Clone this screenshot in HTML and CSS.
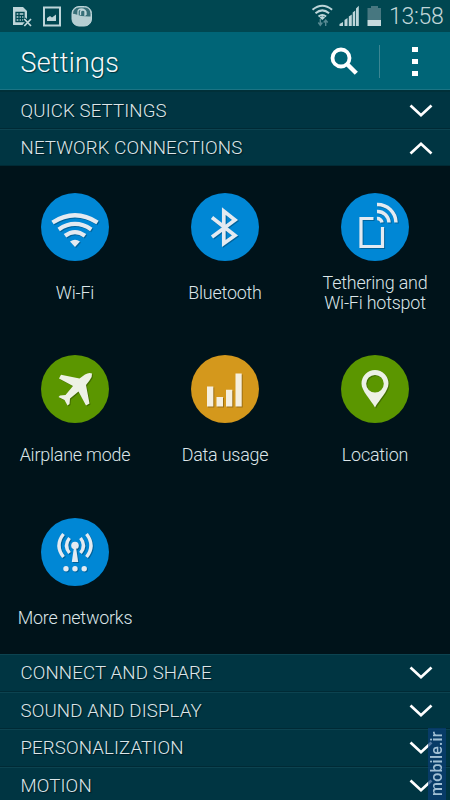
FILE: index.html
```html
<!DOCTYPE html>
<html lang="en">
<head>
<meta charset="utf-8">
<title>Settings</title>
<link rel="stylesheet" href="styles.css">
</head>
<body>
<svg class="defs" width="0" height="0">
  <symbol id="down" viewBox="0 0 24 14"><path d="M1.500 1.500 12 11.200 22.500 1.500" fill="none" stroke="currentColor" stroke-width="2.700"/></symbol>
  <symbol id="up" viewBox="0 0 24 14"><path d="M1.500 12.500 12 2.800 22.500 12.500" fill="none" stroke="currentColor" stroke-width="2.700"/></symbol>
</svg>
<div class="screen">
  <div class="status">
    <svg class="status-left" viewBox="0 0 100 32" width="100" height="32">
      <path d="M13 7h10l4 4v14H13z" fill="#bdd5d9"/>
      <path d="M16 12.500h8v9h-8zM16 15.500h8M16 18.500h8M19 12.500v9M21.500 15v6" fill="none" stroke="#004751" stroke-width="1.300"/>
      <path d="m24 19 7 7m0-7-7 7" stroke="#004751" stroke-width="4"/>
      <path d="m24.300 19 6.700 7m0-7-6.700 7" stroke="#c3dadd" stroke-width="1.700"/>
      <path d="M44 7.500h16v18H44z" fill="none" stroke="#bdd5d9" stroke-width="2"/>
      <path d="M47 21v-3l3-2 2 1.500 4-3v6.500z" fill="#bdd5d9"/>
      <rect x="72" y="6.500" width="19.500" height="19.500" rx="7" fill="#b5ced2" stroke="#bdd5d9"/>
      <path d="M73 14Q73 8 79 7.500h6q5 .5 5.500 6v3Q82 17 73 13.500z" fill="#376f78"/>
      <path d="M78 15v-3q0-3 3.500-3t3.500 3v4M80.500 15v-3q0-2 2.500-2t3 2v3" fill="none" stroke="#bdd5d9" stroke-width="1.300"/>
    </svg>
    <div class="status-right">
      <svg viewBox="310 0 74 32" width="74" height="32">
        <g fill="none" stroke="#bdd5d9" stroke-width="2">
          <path d="M312.500 9.700q9.800-8 19.600 0M315.500 13.200q6.800-5.700 13.600 0M318.500 16.500q3.800-3 7.600 0"/>
        </g>
        <path d="m319.500 17.500 2.800-1.500 2.800 1.500-2.800 2.500z" fill="#bdd5d9"/>
        <path d="M320.300 19v6m-2-2.500 2 2.800 2-2.800M325.700 26v-5.500m-2 2 2-2.500 2 2.500" fill="none" stroke="#578a92" stroke-width="1.400"/>
        <path d="M339.500 26v-2l3.500-2v4zM344.500 26v-6l3-2v8zM348.800 26v-9.500l3-2V26zM352.700 26V12.500l2.500-2V26zM356 26V8.500l2.800-2.800V26z" fill="#bdd5d9"/>
        <path d="M371 6h7v2h3v12h-13.500V8H371z" fill="#477780"/>
        <path d="M367.500 20H381v6h-13.500z" fill="#c6dadd"/>
      </svg>
      <span class="clock">13:58</span>
    </div>
  </div>
  <header class="bar">
    <h1>Settings</h1>
    <div class="actions">
      <svg width="30" height="30" viewBox="0 0 30 30"><circle cx="12" cy="12" r="8.500" fill="none" stroke="#fff" stroke-width="3.800"/><path d="m17.500 17.500 9.800 9.800" stroke="#fff" stroke-width="4.400"/></svg>
      <i class="rule"></i>
      <div class="more"><i></i><i></i><i></i></div>
    </div>
  </header>
  <div class="row first"><span>QUICK SETTINGS</span><svg><use href="#down"/></svg></div>
  <div class="row"><span>NETWORK CONNECTIONS</span><svg><use href="#up"/></svg></div>
  <main class="grid">
    <div class="item">
      <svg class="icon blue" viewBox="0 0 68 68"><g fill="none" stroke="#e4eaf1" stroke-width="4.200">
        <path d="M11.500 29.500q22.500-14.500 45 0M17.700 36.400q16.300-11 32.600 0M24 42.800q10-7.500 20 0"/></g><path d="m29 48.500q5-3.500 10 0L34 54z" fill="#e4eaf1"/></svg>
      <p>Wi-Fi</p>
    </div>
    <div class="item">
      <svg class="icon blue" viewBox="0 0 68 68"><path d="M21 24.500 44 42.500 32.800 50.500V18L44 27 21 44" fill="none" stroke="#e4eaf1" stroke-width="3.700"/></svg>
      <p>Bluetooth</p>
    </div>
    <div class="item">
      <svg class="icon blue" viewBox="0 0 68 68"><path d="M32.500 25.500H20v28h21.500V34" fill="none" stroke="#e4eaf1" stroke-width="3.200"/><path d="M36 25.500a4.700 4.700 0 0 1 5 4M36 18.500a11.500 11.500 0 0 1 12 11M36 11.500a18.500 18.500 0 0 1 19 18" fill="none" stroke="#e4eaf1" stroke-width="3.500"/></svg>
      <p class="two">Tethering and<br><span>Wi-Fi hotspot</span></p>
    </div>
    <div class="item">
      <svg class="icon green" viewBox="0 0 68 68"><path d="M20 19.700 38.500 23.500 44 19.500Q48 17 51 18.500 51.500 22 48.500 25.500L45 30 48.500 48.500 45 50.500 37.500 36.500 29 43.500 28.500 49 26.500 50.500 23.500 45 17.500 42 19 40.500 24.500 40 32 31 18 23.500z" fill="#edf1e5"/></svg>
      <p>Airplane mode</p>
    </div>
    <div class="item">
      <svg class="icon amber" viewBox="0 0 68 68"><path d="M16 31.500h6.300v20H16zM25.500 42H32v9.500h-6.500zM35 34.700h6.300v16.800H35zM44.500 18.500h6.200v33h-6.200z" fill="#f5efdf"/></svg>
      <p>Data usage</p>
    </div>
    <div class="item">
      <svg class="icon green" viewBox="0 0 68 68"><path fill-rule="evenodd" d="M34 52.500C30 45 20.500 36 20.500 28.500a13.500 13.500 0 0 1 27 0C47.500 36 38 45 34 52.500zM34 20a8.800 8.800 0 1 0 0 17.600A8.800 8.800 0 0 0 34 20z" fill="#edf1e5"/></svg>
      <p>Location</p>
    </div>
    <div class="item">
      <svg class="icon blue" viewBox="0 0 68 68"><g fill="none" stroke="#e4eaf1" stroke-width="3.400">
        <path d="M22.500 16q-9 11.500 0 23M45.500 16q9 11.500 0 23M28.500 20q-6 7.500 0 15M39.500 20q6 7.500 0 15"/></g>
        <circle cx="34" cy="27.500" r="3.800" fill="#e4eaf1"/><path d="M33 29h2l2.200 15h-6.400z" fill="#e4eaf1"/>
        <g fill="#e4eaf1"><circle cx="25" cy="50.700" r="2.700"/><circle cx="34" cy="50.700" r="2.700"/><circle cx="43.200" cy="50.700" r="2.700"/></g></svg>
      <p>More networks</p>
    </div>
  </main>
  <div class="row"><span>CONNECT AND SHARE</span><svg><use href="#down"/></svg></div>
  <div class="row"><span>SOUND AND DISPLAY</span><svg><use href="#down"/></svg></div>
  <div class="row"><span>PERSONALIZATION</span><svg><use href="#down"/></svg></div>
  <div class="row"><span>MOTION</span><svg><use href="#down"/></svg></div>
  <div class="watermark">mobile.ir</div>
</div>
</body>
</html>
```
FILE: styles.css
```css
* { box-sizing: border-box; }
body { margin: 0; background: #00141a; }
h1, p { margin: 0; font-weight: 300; }
.defs { position: absolute; }
.screen {
  position: relative;
  width: 450px;
  height: 800px;
  overflow: hidden;
  background: #00131a;
  color: #dce6e9;
  font-family: Roboto, "Liberation Sans", sans-serif;
  font-weight: 300;
}
.status {
  height: 32px;
  display: flex;
  justify-content: space-between;
  background: #004751;
}
.status-right { display: flex; width: 140px; }
.clock {
  padding-left: 5px;
  font-size: 23px;
  letter-spacing: -0.3px;
  line-height: 33px;
  color: #c0d6d9;
  white-space: nowrap;
}
.bar {
  height: 58px;
  display: flex;
  justify-content: space-between;
  align-items: center;
  padding: 0 32px 0 20.5px;
  background: #006577;
  border-bottom: 1px solid #1b7484;
}
.bar h1 {
  font-size: 27px;
  letter-spacing: 0.2px;
  line-height: 32px;
  padding-top: 4px;
  color: #f5fafb;
  text-shadow: 1px 1px 1px #00303a;
}
.actions { display: flex; align-items: center; padding-top: 2px; }
.actions > svg { margin-top: -2px; }
.rule { width: 1px; height: 33px; margin-left: 20px; background: #3b8693; }
.more { display: grid; gap: 7px; margin-left: 32px; }
.more i { width: 6px; height: 5px; background: #fff; }
.row {
  height: 37.5px;
  display: flex;
  justify-content: space-between;
  align-items: center;
  padding: 1px 17px 0 20.5px;
  background: #003542;
  border-top: 1px solid #0c4350;
  border-bottom: 1px solid #002a35;
  font-size: 18.7px;
  letter-spacing: 0.1px;
  white-space: nowrap;
  text-shadow: 1px 1px 1px #001a22;
}
.row.first { height: 38.5px; padding-top: 2px; border-top: 2px solid #003039; }
.row svg { width: 24px; height: 14px; color: #fff; }
.grid {
  height: 488px;
  display: grid;
  grid-template-columns: repeat(3, 150px);
  grid-auto-rows: 162.5px;
}
.item { display: flex; flex-direction: column; align-items: center; padding-top: 26.5px; }
.icon { width: 68px; height: 68px; border-radius: 50%; flex: none; }
.icon > * { filter: drop-shadow(1px 1px 0.5px #0004); }
.blue { background: #0087d5; }
.green { background: #5b9600; }
.amber { background: #d4981c; }
.item p {
  margin-top: 22px;
  font-size: 17.9px;
  letter-spacing: -0.2px;
  line-height: 20px;
  text-align: center;
  white-space: nowrap;
}
.item p.two { margin-top: 12px; }
.watermark {
  position: absolute;
  left: 428px;
  top: 728px;
  width: 18px;
  height: 72px;
  writing-mode: vertical-rl;
  transform: rotate(180deg);
  background: #0a3f78b3;
  color: #a0bfd4;
  font-size: 16px;
  letter-spacing: 0.2px;
  line-height: 18px;
  font-weight: 500;
  text-align: center;
}
```
